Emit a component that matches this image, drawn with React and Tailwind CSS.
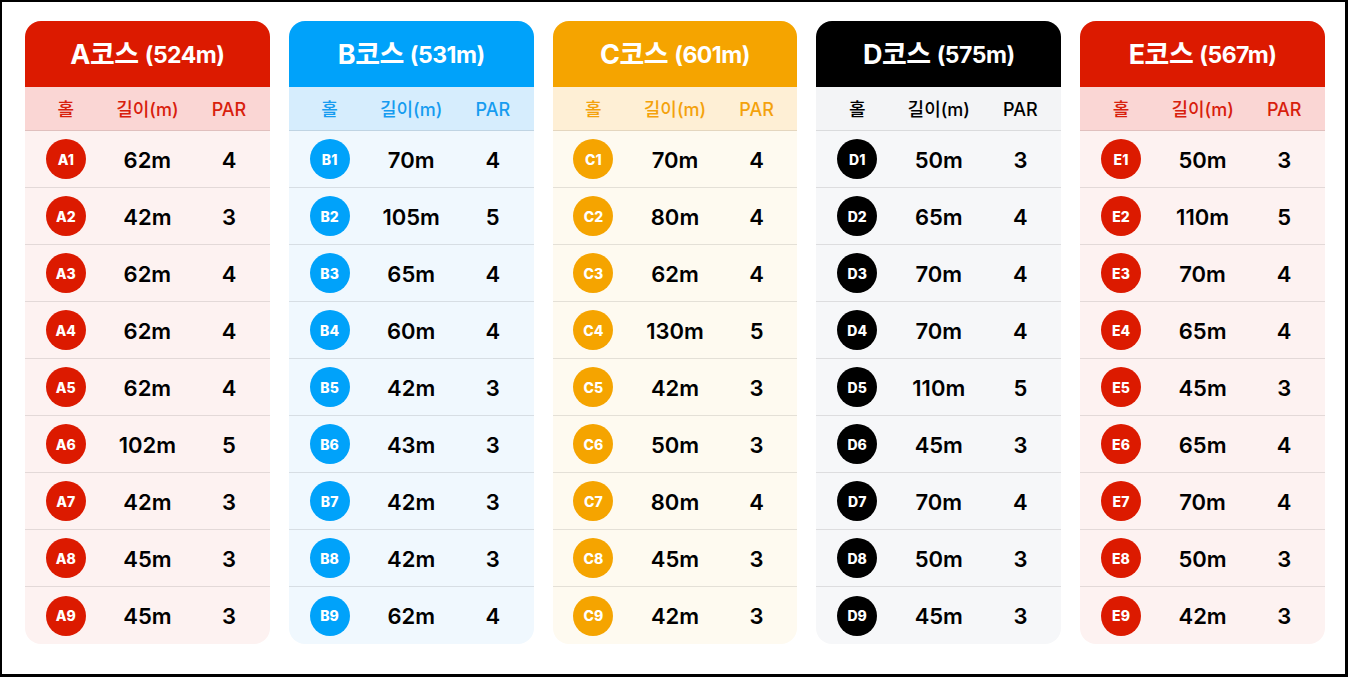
import React from "react";

const courses = [
  {
    key: "A",
    total: "524m",
    head: "bg-[#dc1a00]",
    sub: "bg-[#fad6d4] text-[#d8200c]",
    body: "bg-[#fdf2f1]",
    dot: "bg-[#dc1a00]",
    holes: [["62m", 4], ["42m", 3], ["62m", 4], ["62m", 4], ["62m", 4], ["102m", 5], ["42m", 3], ["45m", 3], ["45m", 3]],
  },
  {
    key: "B",
    total: "531m",
    head: "bg-[#00a2fa]",
    sub: "bg-[#d6edfd] text-[#179cf0]",
    body: "bg-[#f0f8fe]",
    dot: "bg-[#00a2fa]",
    holes: [["70m", 4], ["105m", 5], ["65m", 4], ["60m", 4], ["42m", 3], ["43m", 3], ["42m", 3], ["42m", 3], ["62m", 4]],
  },
  {
    key: "C",
    total: "601m",
    head: "bg-[#f5a400]",
    sub: "bg-[#feefd5] text-[#f4a20c]",
    body: "bg-[#fefaf0]",
    dot: "bg-[#f5a400]",
    holes: [["70m", 4], ["80m", 4], ["62m", 4], ["130m", 5], ["42m", 3], ["50m", 3], ["80m", 4], ["45m", 3], ["42m", 3]],
  },
  {
    key: "D",
    total: "575m",
    head: "bg-black",
    sub: "bg-[#f3f4f6] text-black",
    body: "bg-[#f6f7f9]",
    dot: "bg-black",
    holes: [["50m", 3], ["65m", 4], ["70m", 4], ["70m", 4], ["110m", 5], ["45m", 3], ["70m", 4], ["50m", 3], ["45m", 3]],
  },
  {
    key: "E",
    total: "567m",
    head: "bg-[#dc1a00]",
    sub: "bg-[#fad6d4] text-[#d8200c]",
    body: "bg-[#fdf2f1]",
    dot: "bg-[#dc1a00]",
    holes: [["50m", 3], ["110m", 5], ["70m", 4], ["65m", 4], ["45m", 3], ["65m", 4], ["70m", 4], ["50m", 3], ["42m", 3]],
  },
];

const font = "font-['Inter','Noto_Sans_CJK_KR',sans-serif]";

function Card({ c }) {
  return (
    <div className={`flex flex-col overflow-hidden rounded-2xl ${c.body}`}>
      <div className={`flex h-[66px] items-center justify-center pt-[3px] ${c.head} text-white font-bold`}>
        <span className="text-[27px] tracking-[-0.5px]">{c.key}코스</span>
        <span className="ml-[6px] text-[23px] tracking-[-0.5px]">({c.total})</span>
      </div>
      <div className={`grid h-[44px] grid-cols-3 items-center border-b border-black/10 pt-[2px] text-center text-[18px] font-medium ${c.sub}`}>
        <span>홀</span>
        <span>길이(m)</span>
        <span>PAR</span>
      </div>
      {c.holes.map(([len, par], i) => (
        <div
          key={i}
          className={`grid h-[57px] grid-cols-3 items-center text-center ${i < 8 ? "border-b border-black/10" : ""}`}
        >
          <div className="flex justify-center">
            <div className={`flex h-[40px] w-[40px] items-center justify-center rounded-full ${c.dot} text-[14px] font-extrabold text-white`}>
              {c.key}
              {i + 1}
            </div>
          </div>
          <span className="pt-[2px] text-[22px] font-semibold text-black">{len}</span>
          <span className="pt-[2px] text-[22px] font-semibold text-black">{par}</span>
        </div>
      ))}
    </div>
  );
}

export default function App() {
  return (
    <div className={`h-[677px] w-[1348px] border-t-2 border-l-2 border-r-[3px] border-b-[3px] border-black bg-white ${font}`}>
      <div className="ml-[23px] grid w-[1300px] grid-cols-5 gap-[19px] pt-[19px]">
        {courses.map((c) => (
          <Card key={c.key} c={c} />
        ))}
      </div>
    </div>
  );
}
